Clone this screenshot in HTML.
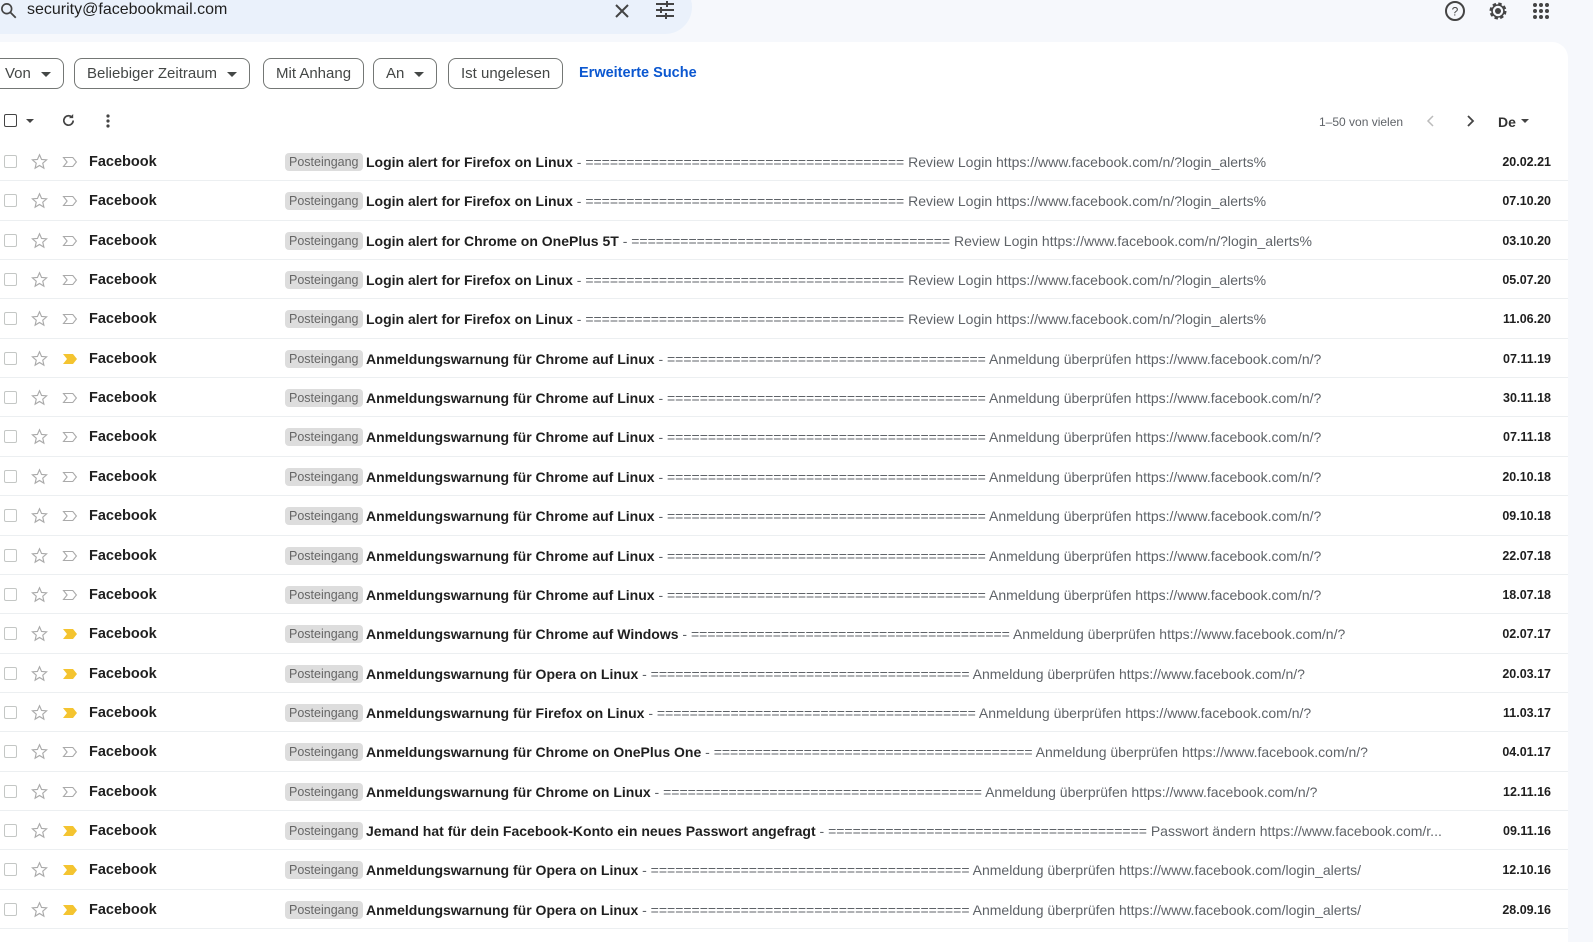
<!DOCTYPE html>
<html><head><meta charset="utf-8"><style>
*{margin:0;padding:0;box-sizing:border-box}
body{width:1593px;height:925px;overflow:hidden;background:#f6f8fc;font-family:"Liberation Sans",Arial,sans-serif;position:relative;color:#202124}
.search{position:absolute;left:-30px;top:-20px;width:722px;height:54px;background:#eaf1fb;border-radius:27px}
.stext{position:absolute;left:27px;top:1px;font-size:16px;color:#1f1f1f}
.main{position:absolute;left:0;top:42px;width:1568px;height:900px;background:#fff;border-top-right-radius:16px}
.chip{position:absolute;top:58px;height:31px;border:1px solid #747775;border-radius:8px;font-size:15px;color:#444746;line-height:29px;padding:0 12px}
.car{display:inline-block;width:0;height:0;border-left:5px solid transparent;border-right:5px solid transparent;border-top:5px solid #444746;vertical-align:middle;margin-left:10px}
.row{position:absolute;left:0;width:1568px;height:39.4px;border-bottom:1px solid #eceff1;font-size:14px}
.row>*{position:absolute;top:12px;line-height:16px;white-space:nowrap}
.cb{left:4px;top:13px!important;width:13px;height:13px;border:1.5px solid #c4c7c5;border-radius:2px}
.st{left:31px;top:11px!important}
.imp{left:62px;top:13px!important}
.snd{left:89px;font-weight:bold;font-size:14.5px;color:#1f1f1f}
.lbl{left:285px;top:11px!important;background:#dddddd;color:#666;font-size:12.5px;padding:1px 4px;border-radius:4px;line-height:16px}
.sub{left:366px;color:#5f6368;font-size:14px}
.sub b{color:#1f1f1f}
.dt{right:17px;font-weight:bold;font-size:12.5px;color:#1f1f1f}
</style></head><body>
<div class="search"></div>
<svg style="position:absolute;left:0;top:2px" width="18" height="18" viewBox="0 0 24 24"><circle cx="9" cy="9" r="6.5" fill="none" stroke="#444" stroke-width="2.2"/><path d="M14 14l7 7" stroke="#444" stroke-width="2.4"/></svg>
<div class="stext">security@facebookmail.com</div>
<svg style="position:absolute;left:613px;top:2px" width="18" height="18" viewBox="0 0 18 18"><path d="M3 3l12 12M15 3L3 15" stroke="#444" stroke-width="2"/></svg>
<svg style="position:absolute;left:655px;top:0px" width="20" height="20" viewBox="0 0 20 20" stroke="#444" stroke-width="2"><path d="M1 4h18M1 10h18M1 16h18" /><path d="M12 1v6M6 7v6M11 13v6" /></svg>
<svg style="position:absolute;left:1444px;top:0px" width="22" height="22" viewBox="0 0 22 22"><circle cx="11" cy="11" r="9" fill="none" stroke="#444" stroke-width="2"/><text x="11" y="15.5" font-size="12" text-anchor="middle" fill="#444" font-family="Liberation Sans">?</text></svg>
<svg style="position:absolute;left:1487px;top:0px" width="22" height="22" viewBox="0 0 22 22"><circle cx="11" cy="11" r="7.5" fill="none" stroke="#444" stroke-width="2" stroke-dasharray="3.5 2.4"/><circle cx="11" cy="11" r="6" fill="none" stroke="#444" stroke-width="1.6"/><circle cx="11" cy="11" r="3" fill="#444"/></svg>
<svg style="position:absolute;left:1532px;top:2px" width="18" height="18" viewBox="0 0 18 18" fill="#444"><circle cx="3" cy="3" r="2"/><circle cx="9" cy="3" r="2"/><circle cx="15" cy="3" r="2"/><circle cx="3" cy="9" r="2"/><circle cx="9" cy="9" r="2"/><circle cx="15" cy="9" r="2"/><circle cx="3" cy="15" r="2"/><circle cx="9" cy="15" r="2"/><circle cx="15" cy="15" r="2"/></svg>
<div class="main"></div>
<div class="chip" style="left:-10px;padding-left:14px">Von<span class="car"></span></div>
<div class="chip" style="left:74px">Beliebiger Zeitraum<span class="car"></span></div>
<div class="chip" style="left:263px">Mit Anhang</div>
<div class="chip" style="left:373px">An<span class="car"></span></div>
<div class="chip" style="left:448px">Ist ungelesen</div>
<div style="position:absolute;left:579px;top:65px;font-size:14.5px;color:#0b57d0;font-weight:bold">Erweiterte Suche</div>
<div style="position:absolute;left:4px;top:114px;width:13px;height:13px;border:1.5px solid #444;border-radius:2px"></div>
<div style="position:absolute;left:26px;top:119px;border-left:4px solid transparent;border-right:4px solid transparent;border-top:4px solid #444"></div>
<svg style="position:absolute;left:61px;top:113px" width="15" height="15" viewBox="0 0 16 16"><path d="M13 8a5 5 0 1 1-1.5-3.6" fill="none" stroke="#444" stroke-width="1.8"/><path d="M13 1v4.5H8.5z" fill="#444"/></svg>
<svg style="position:absolute;left:105px;top:113px" width="6" height="16" fill="#444"><circle cx="3" cy="3" r="1.6"/><circle cx="3" cy="8" r="1.6"/><circle cx="3" cy="13" r="1.6"/></svg>
<div style="position:absolute;left:1319px;top:115px;font-size:12px;color:#5f6368">1–50 von vielen</div>
<svg style="position:absolute;left:1426px;top:115px" width="10" height="12"><path d="M7 1L2 6l5 5" fill="none" stroke="#bbb" stroke-width="1.5"/></svg>
<svg style="position:absolute;left:1465px;top:115px" width="10" height="12"><path d="M3 1l5 5-5 5" fill="none" stroke="#444" stroke-width="1.8"/></svg>
<div style="position:absolute;left:1498px;top:114px;font-size:14px;font-weight:bold;color:#333">De</div>
<div style="position:absolute;left:1521px;top:119px;border-left:4px solid transparent;border-right:4px solid transparent;border-top:4px solid #444"></div>
<div id="rows"></div>
<script>
const E="=======================================";
const LA=" Review Login https://www.facebook.com/n/?login_alerts%";
const AN=" Anmeldung überprüfen https://www.facebook.com/n/?";
const d=[
["Login alert for Firefox on Linux",LA,"20.02.21",0],
["Login alert for Firefox on Linux",LA,"07.10.20",0],
["Login alert for Chrome on OnePlus 5T",LA,"03.10.20",0],
["Login alert for Firefox on Linux",LA,"05.07.20",0],
["Login alert for Firefox on Linux",LA,"11.06.20",0],
["Anmeldungswarnung für Chrome auf Linux",AN,"07.11.19",1],
["Anmeldungswarnung für Chrome auf Linux",AN,"30.11.18",0],
["Anmeldungswarnung für Chrome auf Linux",AN,"07.11.18",0],
["Anmeldungswarnung für Chrome auf Linux",AN,"20.10.18",0],
["Anmeldungswarnung für Chrome auf Linux",AN,"09.10.18",0],
["Anmeldungswarnung für Chrome auf Linux",AN,"22.07.18",0],
["Anmeldungswarnung für Chrome auf Linux",AN,"18.07.18",0],
["Anmeldungswarnung für Chrome auf Windows",AN,"02.07.17",1],
["Anmeldungswarnung für Opera on Linux",AN,"20.03.17",1],
["Anmeldungswarnung für Firefox on Linux",AN,"11.03.17",1],
["Anmeldungswarnung für Chrome on OnePlus One",AN,"04.01.17",0],
["Anmeldungswarnung für Chrome on Linux",AN,"12.11.16",0],
["Jemand hat für dein Facebook-Konto ein neues Passwort angefragt"," Passwort ändern https://www.facebook.com/r...","09.11.16",1],
["Anmeldungswarnung für Opera on Linux"," Anmeldung überprüfen https://www.facebook.com/login_alerts/","12.10.16",1],
["Anmeldungswarnung für Opera on Linux"," Anmeldung überprüfen https://www.facebook.com/login_alerts/","28.09.16",1]];
let h="";
d.forEach((r,i)=>{
const imp=r[3]?'<path d="M1 2h10l4 5-4 5H1l4-5z" fill="#f4c430"/>':'<path d="M1.5 2.5h9.3l3.6 4.5-3.6 4.5H1.5l3.6-4.5z" fill="none" stroke="#aaa" stroke-width="1.1"/>';
h+=`<div class="row" style="top:${142+i*39.35}px"><div class="cb"></div><svg class="st" width="17" height="17" viewBox="0 0 24 24"><path d="M12 2.5l2.9 6.6 7.1.6-5.4 4.7 1.6 7-6.2-3.8-6.2 3.8 1.6-7L2 9.7l7.1-.6z" fill="none" stroke="#aaa" stroke-width="1.6"/></svg><svg class="imp" width="16" height="14">${imp}</svg><span class="snd">Facebook</span><span class="lbl">Posteingang</span><span class="sub"><b>${r[0]}</b> - ${E}${r[1]}</span><span class="dt">${r[2]}</span></div>`;});
document.getElementById("rows").innerHTML=h;
</script>
</body></html>
